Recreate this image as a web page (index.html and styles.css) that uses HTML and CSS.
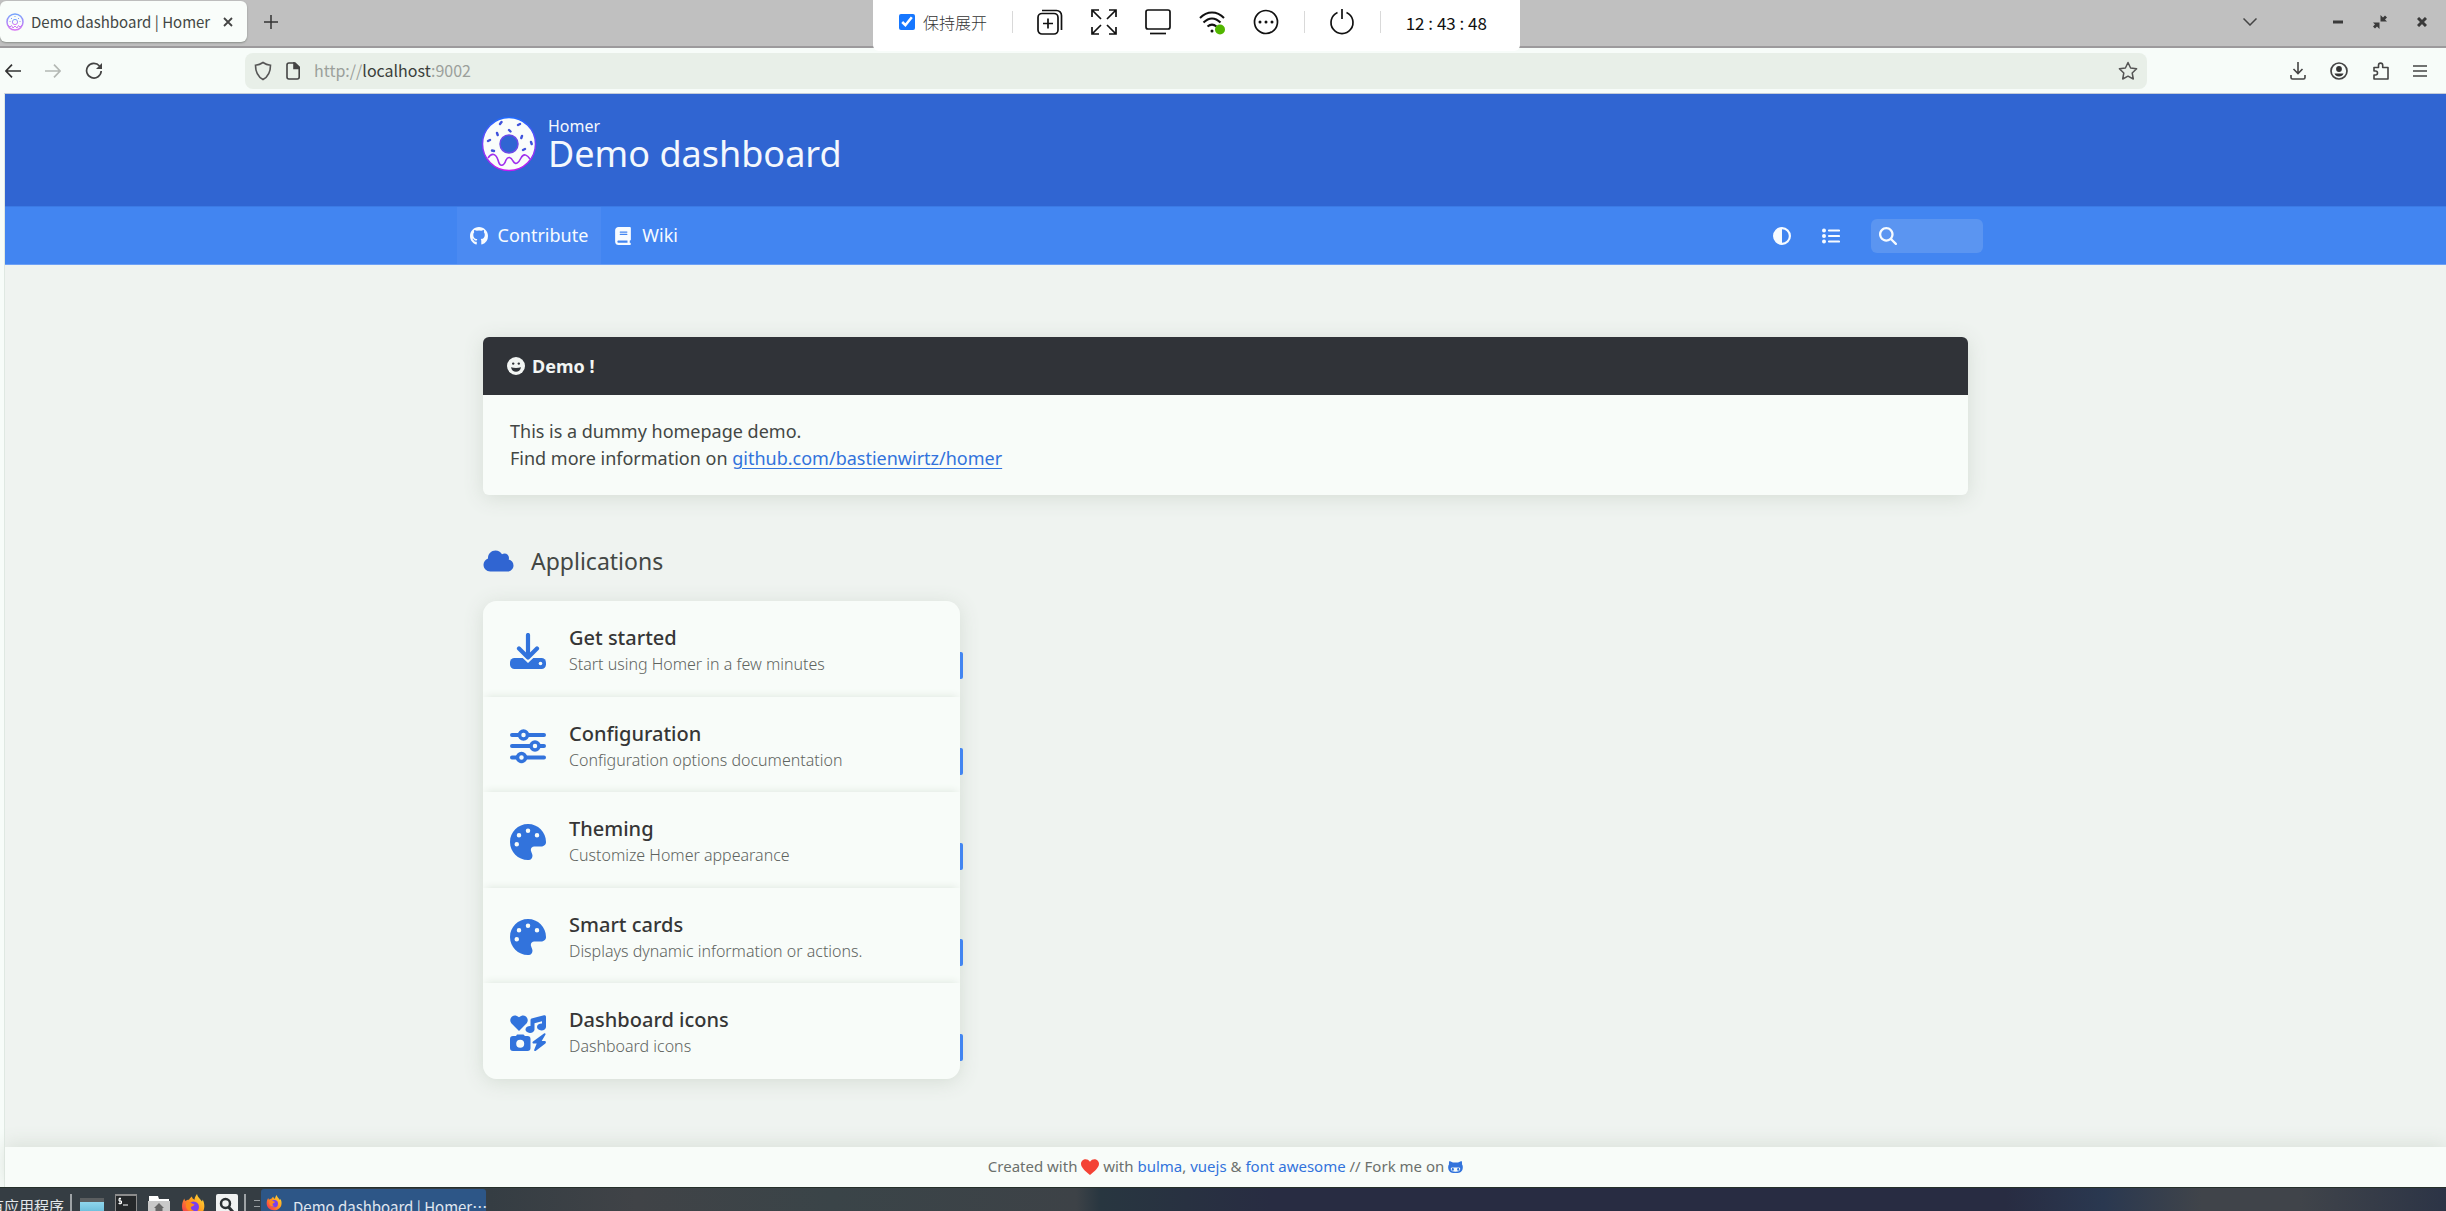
FILE: index.html
```html
<!DOCTYPE html>
<html lang="en">
<head>
<meta charset="utf-8">
<title>Demo dashboard | Homer</title>
<link rel="stylesheet" href="styles.css">
</head>
<body>
<svg width="0" height="0" class="defs" aria-hidden="true">
  <defs>
    <linearGradient id="rim" x1="0" y1="0" x2="0" y2="1"><stop offset="0" stop-color="#1f6bff"/><stop offset="1" stop-color="#c41af0"/></linearGradient>
    <linearGradient id="flame" x1="1" y1="0" x2="0" y2="1"><stop offset="0" stop-color="#ffe83d"/><stop offset=".45" stop-color="#ff9a1f"/><stop offset="1" stop-color="#f5215c"/></linearGradient>
    <linearGradient id="desk" x1="0" y1="0" x2="0" y2="1"><stop offset="0" stop-color="#8fd6ec"/><stop offset="1" stop-color="#5fb4d4"/></linearGradient>
    <symbol id="firefox" viewBox="0 0 24 24">
      <path fill="url(#flame)" d="M12 23C5.500 23 1 18.500 1 12.500 1 9 2 6.500 3.500 4.500c0 1 .3 2 1 2.500 1-.8 2-1.200 3.500-1.200C9 4 10 3 11 2.500c0 1.500 1 2.500 2.500 3.200C13.500 4 14.500 2 16 0c.3 3 3 4.500 5 7.500.5-.5.600-1.200.6-2C23 8 23.500 10.500 23.300 13 23 19 18 23 12 23z"/>
      <circle cx="12.500" cy="13" r="5.500" fill="#7a3ff0"/>
      <path fill="#ff8a1c" d="M5 9c2-1.500 4.500-1 6 .5 1 .6 2 .5 2.500 1-.5 1.500-2.500 1.500-3.500 2.500-.5 2 1 3.500 3 3.500-3 2-7 0-8-3.500z"/>
    </symbol>
    <symbol id="palette" viewBox="0 0 512 512"><path fill="currentColor" d="M512 256v2.700c-.4 36.500-33.600 61.300-70.100 61.300H344c-26.500 0-48 21.500-48 48 0 3.400.4 6.700 1 9.900 2.100 10.200 6.500 20 10.800 29.900 6.100 13.800 12.100 27.500 12.100 42 0 31.800-21.600 60.700-53.400 62-3.500.1-7 .2-10.600.2C114.600 512 0 397.400 0 256S114.600 0 256 0s256 114.600 256 256zM128 288a32 32 0 1 0-64 0 32 32 0 1 0 64 0zm0-96a32 32 0 1 0 0-64 32 32 0 1 0 0 64zM288 96a32 32 0 1 0-64 0 32 32 0 1 0 64 0zm96 96a32 32 0 1 0 0-64 32 32 0 1 0 0 64z"/></symbol>
  </defs>
</svg>

<header class="browser">
  <div class="tabbar">
    <div class="tab">
      <svg width="18" height="18" viewBox="0 0 18 18" fill="none" stroke="url(#rim)" opacity=".6"><circle cx="9" cy="9" r="8" stroke-width="1.500"/><circle cx="9" cy="9" r="2.600"/><path d="M2 12l2 2 1.500-1.500L7 15l2-2 2 2 1.500-2.500L14 14l2-2M5 5l1 1M9 3v1M13 5l-1 1M4 8v1M14 8v1"/></svg>
      <span class="tab-title">Demo dashboard | Homer</span>
      <button class="plain" aria-label="Close tab"><svg width="10" height="10" viewBox="0 0 10 10" stroke="#444" stroke-width="1.800"><path d="M1 1l8 8M9 1L1 9"/></svg></button>
    </div>
    <button class="plain new-tab" aria-label="New tab"><svg width="14" height="14" viewBox="0 0 14 14" stroke="#333" stroke-width="1.500"><path d="M7 0v14M0 7h14"/></svg></button>
    <div class="window-buttons">
      <button class="plain list-tabs" aria-label="List tabs"><svg width="14" height="8" viewBox="0 0 14 8" fill="none" stroke="#444" stroke-width="1.500"><path d="M.5.5L7 7 13.500.5"/></svg></button>
      <button class="plain" aria-label="Minimize"><svg width="10" height="12" viewBox="0 0 10 12"><path d="M0 4.500h10v3H0z" fill="#3a3a3a"/></svg></button>
      <button class="plain" aria-label="Restore"><svg width="14" height="14" viewBox="0 0 14 14" fill="#3a3a3a"><path d="M7.500 0v6.500H14L12 4.500l2-2L12 .5l-2 2zM6.500 14V7.500H0l2 2-2 2 2 2 2-2z"/></svg></button>
      <button class="plain" aria-label="Close"><svg width="10" height="10" viewBox="0 0 10 10" stroke="#3a3a3a" stroke-width="3"><path d="M1 1l8 8M9 1L1 9"/></svg></button>
    </div>
  </div>
  <div class="toolbar">
    <div class="history">
      <button class="plain" aria-label="Back"><svg width="16" height="14" viewBox="0 0 16 14" fill="none" stroke="#333" stroke-width="1.700"><path d="M16 7H1M7 .7L.9 7 7 13.300"/></svg></button>
      <button class="plain" aria-label="Forward"><svg width="16" height="14" viewBox="0 0 16 14" fill="none" stroke="#b4b8b4" stroke-width="1.700"><path d="M0 7h15M9 .7L15.100 7 9 13.300"/></svg></button>
      <button class="plain" aria-label="Reload"><svg width="18" height="18" viewBox="0 0 18 18" fill="none" stroke="#444" stroke-width="1.700"><path d="M14.500 4A7.300 7.300 0 1 0 16.200 9"/><path d="M17 1v6h-6z" fill="#444" stroke="none"/></svg></button>
    </div>
    <div class="urlbar">
      <svg width="18" height="20" viewBox="0 0 18 20" fill="none" stroke="#555" stroke-width="1.600"><path d="M9 1.500c2.500 1.800 4.500 2.500 7.500 2.700 0 6-1.500 11-7.500 14.300C3 15.200 1.500 10.200 1.500 4.200 4.500 4 6.500 3.300 9 1.500z"/></svg>
      <svg width="14" height="18" viewBox="0 0 14 18" fill="none" stroke="#444" stroke-width="1.600"><path d="M3 1h6l4.200 4.200V15a2 2 0 0 1-2 2H3a2 2 0 0 1-2-2V3a2 2 0 0 1 2-2z"/><path d="M8 1l5.500 5.500H8z" fill="#444"/></svg>
      <span class="url">http://<b>localhost</b>:9002</span>
      <svg width="20" height="20" viewBox="0 0 20 20" fill="none" stroke="#555" stroke-width="1.500" stroke-linejoin="round"><path d="M10 1.500l2.600 5.500 6 .8-4.400 4.200 1.100 6L10 15.200 4.700 18l1.100-6L1.400 7.800l6-.8z"/></svg>
    </div>
    <div class="extras">
      <button class="plain" aria-label="Downloads"><svg width="16" height="18" viewBox="0 0 16 18" fill="none" stroke="#444" stroke-width="1.600"><path d="M8 0v11M3.500 7L8 11.500 12.500 7M1 13v2.500A1.500 1.500 0 0 0 2.500 17h11a1.500 1.500 0 0 0 1.500-1.500V13"/></svg></button>
      <button class="plain" aria-label="Account"><svg width="18" height="18" viewBox="0 0 18 18"><circle cx="9" cy="9" r="8" fill="none" stroke="#444" stroke-width="1.700"/><circle cx="9" cy="7" r="2.900" fill="#333"/><path d="M4.500 11.500h9c-.5 2-2.500 3-4.500 3s-4-1-4.500-3z" fill="#333"/></svg></button>
      <button class="plain" aria-label="Extensions"><svg width="16" height="18" viewBox="0 0 16 18" fill="none" stroke="#444" stroke-width="1.600" stroke-linejoin="round"><path d="M1 5.500h4.500V3.200a2 2 0 0 1 4.200 0v2.300H15V17H1v-4h1.500a2 2 0 0 0 0-4H1z"/></svg></button>
      <button class="plain" aria-label="Menu"><svg width="14" height="12" viewBox="0 0 14 12" stroke="#444" stroke-width="1.500"><path d="M0 1h14M0 6h14M0 11h14"/></svg></button>
    </div>
  </div>
</header>

<div class="remote">
  <label class="keep"><input type="checkbox" checked><span>保持展开</span></label>
  <i class="sep"></i>
  <div class="remote-tools">
    <svg width="26" height="26" viewBox="0 0 26 26" fill="none" stroke="#111" stroke-width="1.700"><rect x="1" y="4.500" width="20" height="20.500" rx="4"/><path d="M11 9.500v10M6 14.500h10M5 1.500h14.500a5 5 0 0 1 5 5V21"/></svg>
    <svg width="26" height="26" viewBox="0 0 26 26" fill="none" stroke="#111" stroke-width="1.700"><path d="M1 8V1h7M18 1h7v7M25 18v7h-7M8 25H1v-7M1 1l9 9M25 1l-9 9M25 25l-9-9M1 25l9-9"/></svg>
    <svg width="26" height="26" viewBox="0 0 26 26" fill="none" stroke="#111" stroke-width="1.700"><rect x="1" y="1" width="24" height="19" rx="2"/><path d="M5 24.500h16"/></svg>
    <svg width="26" height="26" viewBox="0 0 26 26" fill="none" stroke="#111" stroke-width="2"><path d="M1 9C8 1.500 18 1.500 25 9M4.500 13.500C10 8 16 8 21.500 13.500M8.500 17.500c3-2.500 6-2.500 9 0"/><circle cx="13" cy="22" r="1.500" fill="#111" stroke="none"/><circle cx="21" cy="20.500" r="5" fill="#52b600" stroke="none"/></svg>
    <svg width="26" height="26" viewBox="0 0 26 26" fill="none" stroke="#111" stroke-width="1.700"><circle cx="13" cy="13" r="11.500"/><g fill="#111" stroke="none"><circle cx="7" cy="13" r="1.500"/><circle cx="13" cy="13" r="1.500"/><circle cx="19" cy="13" r="1.500"/></g></svg>
  </div>
  <i class="sep"></i>
  <svg width="26" height="26" viewBox="0 0 26 26" fill="none" stroke="#111" stroke-width="1.700"><path d="M8.500 3.500a11 11 0 1 0 9 0M13 0v10"/></svg>
  <i class="sep"></i>
  <time>12 : 43 : 48</time>
</div>

<div class="page">
  <header class="hero">
    <div class="container brand">
      <svg width="56" height="56" viewBox="0 0 56 56"><circle cx="28" cy="28" r="26.500" fill="#fafdfb" stroke="url(#rim)" stroke-width="1.500"/><circle cx="28" cy="28" r="9" fill="#3065d2" stroke="#6a4be8" stroke-width="1.500"/><path d="M7 42c4-6 8-4 10 2 2 8 6 6 8 0 2-4 5-3 7 1 3 5 6 1 8-3 3-6 7-2 9 1" fill="none" stroke="#a030ee" stroke-width="1.600"/><path d="M19 8l1.500-2M37 9l2-1M28 14l1.500 1.500M16 17l.7 2M41 20l-.7 2M7 25l2-1M50 26l.7 2M11 34.500l2 .5M42 34l2-1" stroke="#3f52dc" stroke-width="2.400" stroke-linecap="round"/></svg>
      <div class="titles"><span class="kicker">Homer</span><h1>Demo dashboard</h1></div>
    </div>
  </header>
  <nav class="navbar">
    <div class="nav-inner">
      <a href="#" class="nav-link current"><svg width="18" height="18" viewBox="0 0 16 16" fill="currentColor"><path d="M8 0C3.580 0 0 3.580 0 8c0 3.540 2.290 6.530 5.470 7.590.4.070.55-.17.55-.38v-2.200c-2.010.37-2.530-.49-2.690-.94-.09-.23-.48-.94-.82-1.130-.28-.15-.68-.52-.01-.53.63-.01 1.080.58 1.230.82.72 1.210 1.870.87 2.330.66.07-.52.28-.87.51-1.070-1.780-.2-3.640-.89-3.640-3.950 0-.87.31-1.590.82-2.150-.08-.2-.36-1.020.08-2.120 0 0 .67-.21 2.200.82a7.600 7.600 0 0 1 4 0c1.530-1.040 2.200-.82 2.200-.82.44 1.100.16 1.920.08 2.120.51.56.82 1.270.82 2.150 0 3.070-1.870 3.750-3.650 3.950.29.25.54.730.54 1.480v2.900c0 .21.150.46.550.38A8 8 0 0 0 16 8c0-4.420-3.580-8-8-8z"/></svg>Contribute</a>
      <a href="#" class="nav-link"><svg width="18" height="18" viewBox="0 0 448 512" fill="currentColor"><path d="M96 0C43 0 0 43 0 96v320c0 53 43 96 96 96h320c17.700 0 32-14.300 32-32s-14.300-32-32-32v-64c17.700 0 32-14.300 32-32V32c0-17.700-14.300-32-32-32H96zm0 384h256v64H96c-17.700 0-32-14.300-32-32s14.300-32 32-32zm32-240c0-8.800 7.200-16 16-16h192c8.800 0 16 7.200 16 16s-7.200 16-16 16H144c-8.800 0-16-7.200-16-16zm16 48h192c8.800 0 16 7.200 16 16s-7.200 16-16 16H144c-8.800 0-16-7.200-16-16s7.200-16 16-16z"/></svg>Wiki</a>
      <div class="nav-tools">
        <button class="plain" aria-label="Toggle theme"><svg width="18" height="18" viewBox="0 0 512 512" fill="currentColor"><path d="M448 256c0-106-86-192-192-192v384c106 0 192-86 192-192zM0 256a256 256 0 1 1 512 0 256 256 0 1 1-512 0z"/></svg></button>
        <button class="plain" aria-label="Toggle layout"><svg width="18" height="18" viewBox="0 0 18 18" fill="none" stroke="currentColor" stroke-width="2.200" stroke-linecap="round"><path d="M7 3.500h10M7 9h10M7 14.500h10"/><g fill="currentColor" stroke="none"><circle cx="2" cy="3.500" r="2"/><circle cx="2" cy="9" r="2"/><circle cx="2" cy="14.500" r="2"/></g></svg></button>
        <label class="search"><svg width="18" height="18" viewBox="0 0 512 512" fill="currentColor"><path d="M416 208c0 45.900-14.900 88.300-40 122.700l126.600 126.700c12.500 12.500 12.500 32.800 0 45.300s-32.800 12.500-45.300 0L330.700 376c-34.400 25.200-76.800 40-122.700 40C93.100 416 0 322.900 0 208S93.100 0 208 0s208 93.100 208 208zM208 352a144 144 0 1 0 0-288 144 144 0 1 0 0 288z"/></svg><input type="text" aria-label="Search"></label>
      </div>
    </div>
  </nav>

  <main class="container content">
    <article class="message">
      <h2><svg width="18" height="18" viewBox="0 0 18 18"><circle cx="9" cy="9" r="9" fill="currentColor"/><g fill="#303338"><circle cx="6.200" cy="6.600" r="1.200"/><circle cx="11.800" cy="6.600" r="1.200"/><path d="M4 10.300c3.300.8 6.700.8 10 0-.5 3-2.700 4.500-5 4.500s-4.500-1.500-5-4.500z"/></g></svg>Demo !</h2>
      <p>This is a dummy homepage demo.<br>Find more information on <a href="#">github.com/bastienwirtz/homer</a></p>
    </article>

    <h2 class="group"><svg width="31" height="24" viewBox="0 0 640 512" fill="currentColor"><path d="M0 336c0 79.500 64.500 144 144 144h368c70.700 0 128-57.300 128-128 0-61.900-44-113.600-102.400-125.400 4.100-10.700 6.400-22.400 6.400-34.600 0-53-43-96-96-96-19.700 0-38.100 6-53.300 16.200C367 64.200 315.300 32 256 32c-88.400 0-160 71.600-160 160 0 2.700.1 5.400.2 8.100C40.200 219.800 0 273.200 0 336z"/></svg>Applications</h2>

    <div class="columns">
      <section class="cards">
        <a class="card" href="#"><svg width="36" height="36" viewBox="0 0 36 36"><rect y="25" width="36" height="11" rx="4.500" fill="currentColor"/><path d="M11 21l7 6.500 7-6.500" fill="none" stroke="#f7fcf9" stroke-width="3.500"/><path d="M18 2v21M9 15.500l9 9 9-9" fill="none" stroke="currentColor" stroke-width="4.200" stroke-linecap="round" stroke-linejoin="round"/><circle cx="30.500" cy="30.500" r="1.800" fill="#f7fcf9"/></svg><span class="text"><strong>Get started</strong><small>Start using Homer in a few minutes</small></span></a>
        <a class="card" href="#"><svg width="36" height="36" viewBox="0 0 36 36" stroke="currentColor" stroke-width="4" stroke-linecap="round"><path d="M2 7h32M2 18h32M2 29.500h32"/><g fill="#f7fcf9" stroke-width="3.500"><circle cx="13.500" cy="7" r="4"/><circle cx="25" cy="18" r="4"/><circle cx="11.500" cy="29.500" r="4"/></g></svg><span class="text"><strong>Configuration</strong><small>Configuration options documentation</small></span></a>
        <a class="card" href="#"><svg width="36" height="36"><use href="#palette"/></svg><span class="text"><strong>Theming</strong><small>Customize Homer appearance</small></span></a>
        <a class="card" href="#"><svg width="36" height="36"><use href="#palette"/></svg><span class="text"><strong>Smart cards</strong><small>Displays dynamic information or actions.</small></span></a>
        <a class="card" href="#"><svg width="36" height="36" viewBox="0 0 36 36" fill="currentColor"><path d="M9 16L1.300 8.300C-2 4 3-2.500 9 2.300 15-2.500 20 4 16.700 8.300z"/><path d="M22.500 3.200L34 .2c1-.3 2 .4 2 1.500V12a4.500 3.500 0 1 1-4-3.500V6.200l-7.500 2V14.500a4.500 3.500 0 1 1-4-3.500V5c0-1 .8-1.600 2-1.800z"/><path fill-rule="evenodd" d="M6 21l1-1.500h6.500L15 21h2.500a3 3 0 0 1 3 3v9a3 3 0 0 1-3 3H3a3 3 0 0 1-3-3v-9a3 3 0 0 1 3-3zm4.200 3.700a4 4 0 1 0 0 8 4 4 0 0 0 0-8z"/><path d="M34 18.500L23 26.500c-1 .8-.5 2 .7 2h3l-2.500 6.200c-.4 1.200.8 1.700 1.700 1l9.500-7.200c1-.9.5-2.500-.7-2.500h-3l3.800-6.500c.3-1-.6-1.600-1.500-1z"/></svg><span class="text"><strong>Dashboard icons</strong><small>Dashboard icons</small></span></a>
      </section>
    </div>
  </main>

  <footer class="footer">
    <p>Created with <svg class="heart" width="18" height="16" viewBox="0 0 18 16"><path fill="#f44336" d="M9 16C4 12 0 8.500 0 4.800 0 .5 6-1.800 9 2.800 12-1.800 18 .5 18 4.800 18 8.500 14 12 9 16z"/></svg> with <a href="#">bulma</a>, <a href="#">vuejs</a> &amp; <a href="#">font awesome</a> // Fork me on <a href="#" aria-label="GitHub"><svg width="15" height="12" viewBox="0 0 15 12"><path fill="currentColor" d="M1.500 0L5 1.500h5L13.500 0c.6 1.200.7 2.200.4 3.200C15 4.500 15 6.500 14.500 8.500 13.500 11.500 11 12 7.500 12S1.500 11.500.5 8.500C0 6.500 0 4.500 1.100 3.200.8 2.200.9 1.200 1.500 0z"/><path fill="#f7fcf9" d="M4 6.500h7c2 0 2 4.300-3.500 4.300S2 6.500 4 6.500z"/><ellipse cx="4.800" cy="8.200" rx="1" ry="1.500" fill="currentColor"/><ellipse cx="10.200" cy="8.200" rx="1" ry="1.500" fill="currentColor"/></svg></a></p>
  </footer>
</div>

<div class="taskbar">
  <span class="apps">有应用程序</span>
  <i class="bar"></i>
  <div class="launchers">
    <svg width="24" height="22" viewBox="0 0 24 22"><path fill="#5b5e60" d="M0 4h24v4H0z"/><path fill="url(#desk)" d="M0 8h24v14H0z"/></svg>
    <svg width="22" height="22" viewBox="0 0 22 22"><path fill="#8c8c8c" d="M0 0h22v22H0z"/><path fill="#25282a" d="M1 2h20v20H1z"/><path d="M6 4.500H4v2.500h2.500v2.500H3.500M5 3.500v7M8 11h5" fill="none" stroke="#fff"/></svg>
    <svg width="22" height="22" viewBox="0 0 22 22"><path fill="#fff" d="M1 2h9l1 3h10v3H1z"/><path fill="#c9c9c9" d="M0 7h22v15H0z"/><path fill="#666" d="M11 9l5 5h-1.500v8h-7v-8H6z"/></svg>
    <svg width="24" height="24"><use href="#firefox"/></svg>
    <svg width="22" height="22" viewBox="0 0 22 22"><rect width="22" height="24" rx="2" fill="#f0f2f2"/><circle cx="9.500" cy="9.500" r="4.500" fill="none" stroke="#2b3033" stroke-width="2.500"/><path d="M12.500 13l4.500 5" stroke="#2b3033" stroke-width="3"/></svg>
  </div>
  <i class="bar"></i>
  <svg class="grip" width="6" height="18" viewBox="0 0 6 18" stroke="#9aa0a4"><path d="M0 2.500h6M0 8.500h6M0 14.500h6"/></svg>
  <button class="task"><svg width="16" height="16"><use href="#firefox"/></svg><span lang="zh-CN">Demo dashboard | Homer…</span></button>
</div>
</body>
</html>
```

FILE: styles.css
```css
* { box-sizing: border-box; }

body {
  margin: 0;
  min-height: 100vh;
  display: flex;
  flex-direction: column;
  font: 18px/27px "Noto Sans", "Noto Sans CJK SC", sans-serif;
  color: #434744;
  background: #f7fcf9;
  overflow: hidden;
}

h1, h2, p { margin: 0; font-weight: 400; }
a { color: #3273dc; text-decoration: none; }
svg { display: block; flex: none; }
.defs { position: absolute; }

.plain {
  display: flex;
  align-items: center;
  padding: 0;
  border: 0;
  background: none;
  color: inherit;
}

/* Browser chrome */
.tabbar {
  display: flex;
  align-items: center;
  height: 48px;
  padding-bottom: 3px;
  background: #c0c0c0;
  border-bottom: 2px solid #9c9a9c;
}
.tab {
  display: flex;
  align-items: center;
  width: 247px;
  height: 41px;
  padding: 0 14px 0 6px;
  gap: 7px;
  background: #f9fdfa;
  border-radius: 6px;
  box-shadow: 0 1px 2px #8a8f8a;
  font: 15px/24px "Noto Sans CJK SC", sans-serif;
}
.tab-title { flex: 1; white-space: nowrap; }
.new-tab { margin-left: 17px; }
.window-buttons { display: flex; align-items: center; gap: 30px; margin-left: auto; padding-right: 19px; }
.list-tabs { margin-right: 46px; }

.toolbar {
  display: flex;
  align-items: center;
  height: 45px;
  padding: 0 19px 0 5px;
}
.history { display: flex; gap: 24px; width: 240px; }
.urlbar {
  display: flex;
  align-items: center;
  flex: 1;
  height: 36px;
  padding: 0 9px;
  gap: 14px;
  border-radius: 8px;
  background: #e8efe8;
}
.url { flex: 1; padding-bottom: 2px; font: 16px/24px "Noto Sans CJK SC", sans-serif; color: #9ba09b; }
.url b { font-weight: 400; color: #3a3e3a; }
.extras { display: flex; align-items: center; justify-content: space-between; width: 280px; padding-left: 143px; }

/* Remote session bar */
.remote {
  position: absolute;
  top: 0;
  left: 873px;
  display: flex;
  align-items: center;
  width: 647px;
  height: 51px;
  padding: 0 33px 7px 26px;
  justify-content: space-between;
  background: #fff;
  border-radius: 0 0 6px 6px;
  color: #333;
}
.keep { display: flex; align-items: center; gap: 8px; font: 16px/24px "Noto Sans CJK SC", sans-serif; font-weight: 300; }
.keep input { width: 16px; height: 16px; margin: 0; accent-color: #1677ff; }
.remote-tools { display: flex; gap: 28px; }
.sep { width: 1px; height: 22px; background: #d9d9d9; }
.remote time { font: 17px/24px "Noto Sans CJK SC", sans-serif; padding-top: 1px; color: #111; }

/* Dashboard */
.page {
  flex: 1;
  display: flex;
  flex-direction: column;
  margin-left: 4px;
  border-top: 1px solid #c4ccd8;
  border-left: 1px solid #dfe8e2;
  background: #eff3f0;
}
.container { width: 1485px; max-width: 100%; margin: 0 auto; }
.hero { height: 112px; background: #3065d2; color: #f4f8fd; }
.brand { display: flex; gap: 11px; padding-top: 22px; }
.brand > svg { margin-left: -2px; }
.titles { display: flex; flex-direction: column; }
.kicker { font-size: 16px; line-height: 20px; }
h1 { font-size: 36px; line-height: 36px; }

.navbar { background: #4285f1; border-top: 1px solid #3b7ae4; border-bottom: 1px solid #6da0f5; color: #f7fbff; }
.nav-inner { display: flex; align-items: center; width: 1538px; max-width: 100%; height: 57px; margin: 0 auto; }
.nav-link { display: flex; align-items: center; height: 100%; padding: 0 13px; gap: 10px; color: inherit; }
.current { background: #4b8af2; }
.nav-tools { display: flex; align-items: center; gap: 31px; margin-left: auto; padding-right: 12px; }
.search { display: flex; align-items: center; width: 112px; height: 34px; padding: 0 8px; border-radius: 6px; background: #5b95f1; }
.search input { width: 100%; min-width: 0; border: 0; outline: 0; background: none; color: inherit; }

.content { flex: 1; padding-top: 72px; }
.message { border-radius: 6px; background: #f8fcf9; box-shadow: 0 3px 20px #d5ddd5; }
.message h2 {
  display: flex;
  align-items: center;
  gap: 7px;
  height: 58px;
  padding: 0 24px;
  border-radius: 6px 6px 0 0;
  background: #303338;
  color: #f2f5f3;
  font-size: 18px;
  font-weight: 700;
}
.message p { padding: 23px 27px; }
.message a { text-decoration: underline; text-underline-offset: 3px; }

.group { display: flex; align-items: center; gap: 17px; margin: 48px 0 22px; font-size: 23px; line-height: 36px; }
.group svg { color: #3065d2; }

.columns { display: grid; grid-template-columns: repeat(3, 1fr); gap: 27px; }
.cards { border-radius: 14px; box-shadow: 0 3px 20px #d5ddd5; }
.card {
  position: relative;
  display: flex;
  align-items: center;
  height: 96px;
  gap: 23px;
  padding: 3px 27px 0;
  background: #f8fcf9;
  color: #3273dc;
  box-shadow: 0 -3px 8px -3px #dbe5db;
}
.card:nth-child(even) { height: 95px; }
.card:first-child { border-radius: 14px 14px 0 0; box-shadow: none; }
.card:last-child { border-radius: 0 0 14px 14px; }
.card::after {
  content: "";
  position: absolute;
  top: 51px;
  left: 100%;
  width: 3px;
  height: 27px;
  border-radius: 0 2px 2px 0;
  background: #4285f1;
}
.text { display: flex; flex-direction: column; }
.text strong { font-size: 20px; line-height: 27px; font-weight: 500; color: #363636; }
.text small { font-size: 16px; line-height: 26px; font-weight: 300; color: #5f645f; }

.footer {
  height: 40px;
  background: #f8fcf9;
  box-shadow: 0 -4px 18px #dbe2db;
  text-align: center;
  font-size: 15px;
  line-height: 39px;
  color: #6b706c;
}
.footer svg { display: inline-block; vertical-align: -1px; }
.footer .heart { vertical-align: -3px; }

/* Desktop panel */
.taskbar {
  display: flex;
  height: 24px;
  background: linear-gradient(90deg, #353d43 0 20%, #404347 26%, #3a4448 34%, #3d4247 44%, #283640 45%, #282c42 52%, #282c42 82%, #2a3850 86%, #40444a 90%, #40444a 94%, #2c3446 100%);
  border-top: 1px solid #26302b;
  overflow: hidden;
  color: #e4e8ea;
}
.apps { display: flex; justify-content: flex-end; width: 64px; height: 24px; white-space: nowrap; overflow: hidden; font: 15px/24px "Noto Sans CJK SC", sans-serif; padding-top: 6px; flex: none; }
.bar { width: 2px; height: 24px; margin: 6px 8px 0 6px; background: #9ea3a6; flex: none; }
.launchers { display: flex; gap: 11px; padding: 6px 0 0; }
.grip { margin-top: 10px; }
.task {
  display: flex;
  gap: 11px;
  width: 225px;
  height: 40px;
  padding: 6px 0 0 5px;
  margin: 1px 0 0 1px;
  border: 0;
  border-radius: 3px;
  background: #2d5687;
  color: #e0e7f0;
  font: 15px/24px "Noto Sans CJK SC", sans-serif;
  white-space: nowrap;
  align-items: flex-start;
}
```
